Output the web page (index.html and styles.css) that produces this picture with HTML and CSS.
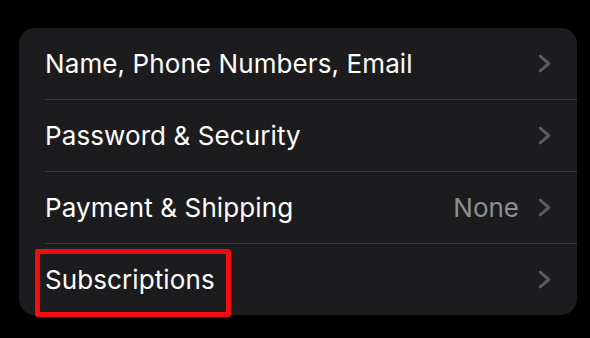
FILE: index.html
```html
<!DOCTYPE html>
<html>
<head>
<meta charset="utf-8">
<link rel="stylesheet" href="styles.css">
</head>
<body>
<div class="card">
  <div class="row"><div class="inner sep"><span class="label">Name, Phone Numbers, Email</span><span class="right"><svg class="chev" width="13" height="19" viewBox="0 0 13 19"><polyline points="2.2,2.2 10.8,9.5 2.2,16.8" fill="none" stroke="#5b5b5f" stroke-width="3" stroke-linecap="round" stroke-linejoin="round"/></svg></span></div></div>
  <div class="row"><div class="inner sep"><span class="label">Password &amp; Security</span><span class="right"><svg class="chev" width="13" height="19" viewBox="0 0 13 19"><polyline points="2.2,2.2 10.8,9.5 2.2,16.8" fill="none" stroke="#5b5b5f" stroke-width="3" stroke-linecap="round" stroke-linejoin="round"/></svg></span></div></div>
  <div class="row"><div class="inner sep"><span class="label">Payment &amp; Shipping</span><span class="right"><span class="value">None</span><svg class="chev" width="13" height="19" viewBox="0 0 13 19"><polyline points="2.2,2.2 10.8,9.5 2.2,16.8" fill="none" stroke="#5b5b5f" stroke-width="3" stroke-linecap="round" stroke-linejoin="round"/></svg></span></div></div>
  <div class="row"><div class="inner"><span class="label">Subscriptions</span><span class="right"><svg class="chev" width="13" height="19" viewBox="0 0 13 19"><polyline points="2.2,2.2 10.8,9.5 2.2,16.8" fill="none" stroke="#5b5b5f" stroke-width="3" stroke-linecap="round" stroke-linejoin="round"/></svg></span></div></div>
  <div class="highlight"></div>
</div>
</body>
</html>
```
FILE: styles.css
```css
html, body {
  margin: 0;
  padding: 0;
  background: #000;
  width: 590px;
  height: 338px;
  overflow: hidden;
}
body {
  font-family: Inter, "Noto Sans", sans-serif;
  color: #fff;
}
.card {
  position: relative;
  margin: 28px 0 0 19px;
  width: 558px;
  background: #1c1c1e;
  border-radius: 16px;
}
.row {
  padding-left: 26px;
}
.inner {
  height: 71px;
  display: flex;
  align-items: center;
  justify-content: space-between;
  padding-right: 26px;
}
.inner.sep {
  border-bottom: 1px solid #39393c;
}
.row:last-of-type .inner {
  height: 72px;
}
.label {
  font-size: 26px;
  letter-spacing: 0.1px;
}
.right {
  display: flex;
  align-items: center;
  gap: 19px;
}
.value {
  font-size: 26px;
  color: #8e8e93;
}
.chev {
  display: block;
}
.highlight {
  position: absolute;
  left: 16px;
  top: 221px;
  width: 186px;
  height: 58px;
  border: 5px solid #f20d12;
  border-radius: 3px;
}
```
